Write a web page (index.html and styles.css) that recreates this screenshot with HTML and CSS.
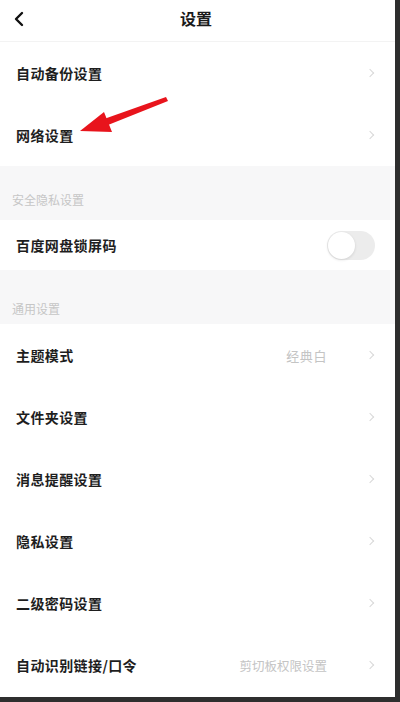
FILE: index.html
```html
<!DOCTYPE html>
<html lang="zh-CN">
<head>
<meta charset="utf-8">
<title>设置</title>
<link rel="stylesheet" href="styles.css">
</head>
<body>
<div class="page">
  <header class="header">
    <svg class="back" width="12" height="16" viewBox="0 0 12 16"><path d="M9 2 L3 8 L9 14" fill="none" stroke="#111" stroke-width="2.4" stroke-linecap="round" stroke-linejoin="round"/></svg>
    <div class="title">设置</div>
  </header>
  <div class="row"><span class="label">自动备份设置</span><span class="chev"></span></div>
  <div class="row"><span class="label">网络设置</span><span class="chev"></span></div>
  <div class="section s1">安全隐私设置</div>
  <div class="row short"><span class="label">百度网盘锁屏码</span><span class="toggle"><span class="knob"></span></span></div>
  <div class="section s2">通用设置</div>
  <div class="row"><span class="label">主题模式</span><span class="value">经典白</span><span class="chev"></span></div>
  <div class="row"><span class="label">文件夹设置</span><span class="chev"></span></div>
  <div class="row"><span class="label">消息提醒设置</span><span class="chev"></span></div>
  <div class="row"><span class="label">隐私设置</span><span class="chev"></span></div>
  <div class="row"><span class="label">二级密码设置</span><span class="chev"></span></div>
  <div class="row"><span class="label">自动识别链接/口令</span><span class="value small">剪切板权限设置</span><span class="chev"></span></div>
  <svg class="arrow" width="400" height="200" viewBox="0 0 400 200">
    <path d="M166 97 L168 101 L108 125 L104 119 Z" fill="#e8141c"/>
    <path d="M80 131 L104 112 L112 132 Z" fill="#e8141c"/>
  </svg>
</div>
</body>
</html>
```
FILE: styles.css
```css
html, body {
  margin: 0;
  padding: 0;
  background: #2e2e2e;
}
body {
  font-family: "Noto Sans CJK SC", "Noto Sans", sans-serif;
}
.page {
  position: relative;
  width: 395px;
  height: 697px;
  background: #ffffff;
  overflow: hidden;
}
.header {
  height: 41px;
  border-bottom: 1px solid #f3f3f3;
  display: flex;
  align-items: flex-start;
  justify-content: center;
  position: relative;
  box-sizing: content-box;
}
.back {
  position: absolute;
  left: 13px;
  top: 11px;
}
.title {
  font-size: 16px;
  font-weight: 700;
  color: #1a1a1a;
  line-height: 22px;
  padding-top: 7px;
  margin-left: -3px;
}
.row {
  height: 62px;
  display: flex;
  align-items: center;
  padding: 0 22px 0 16px;
  background: #ffffff;
}
.row.short {
  height: 50px;
}
.label {
  font-size: 14px;
  font-weight: 700;
  color: #1e1e1e;
  flex: 1;
  letter-spacing: 0.4px;
}
.value {
  font-size: 13px;
  color: #c4c4c4;
  margin-right: 40px;
  letter-spacing: 0.6px;
}
.value.small {
  font-size: 12.5px;
  letter-spacing: 0;
}
.chev {
  width: 5px;
  height: 5px;
  border-top: 1.3px solid #d8d8d8;
  border-right: 1.3px solid #d8d8d8;
  transform: rotate(45deg);
}
.section {
  background: #f7f7f8;
  color: #c6c6c6;
  font-size: 12px;
  padding-left: 12px;
  display: flex;
  align-items: flex-end;
  box-sizing: border-box;
}
.section.s1 {
  height: 54px;
  padding-bottom: 12px;
}
.section.s2 {
  height: 54px;
  padding-bottom: 7px;
}
.toggle {
  width: 48px;
  height: 29px;
  border-radius: 15px;
  background: #ececec;
  margin-right: -2px;
  position: relative;
  display: flex;
  align-items: center;
}
.knob {
  width: 27px;
  height: 27px;
  border-radius: 50%;
  background: #ffffff;
  margin-left: 1px;
  box-shadow: 0 1px 3px rgba(0,0,0,0.12);
}
.arrow {
  position: absolute;
  left: 0;
  top: 0;
  pointer-events: none;
}
```
